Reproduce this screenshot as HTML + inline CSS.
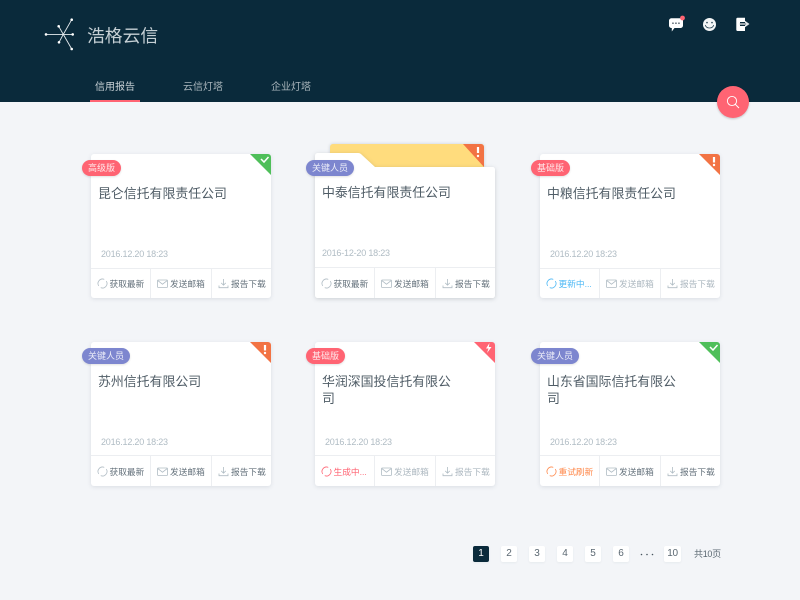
<!DOCTYPE html>
<html lang="zh"><head><meta charset="utf-8"><title>浩格云信</title>
<style>
html,body{margin:0;padding:0}
body{width:800px;height:600px;overflow:hidden;position:relative;background:#f3f5f8;font-family:"Liberation Sans","Noto Sans CJK SC",sans-serif;color:#4c5a64}
div,span,svg{position:absolute;display:block}
.hd{left:0;top:0;width:800px;height:102px;background:#0a2a3b}
.logo{left:87px;top:25px;font-size:17.800px;line-height:22px;color:#c6d0d5;white-space:nowrap}
.nav{top:81px;font-size:10px;line-height:14px;color:#aab6bc;white-space:nowrap}
.ul{left:90px;top:100px;width:50px;height:2px;background:#ff6473}
.sb{left:717px;top:86px;width:32px;height:32px;border-radius:50%;background:#ff6473;box-shadow:0 1px 2px rgba(0,0,0,.2)}
.card{width:180px;height:144px;background:#fff;border-radius:3px;box-shadow:0 1px 4px rgba(40,60,80,.12)}
.tri{right:0;top:0;width:22px;height:22px;border-top-right-radius:3px;overflow:hidden}
.tag{left:-9px;top:6px;height:16px;line-height:16px;border-radius:8px;color:rgba(255,255,255,.85);font-size:9px;text-align:center;white-space:nowrap;box-shadow:0 1px 2px rgba(0,0,0,.12)}
.r{width:39px;background:#ff6473}
.p{width:48px;background:#7d86cf}
.t{left:7px;top:31px;width:135px;font-size:12.900px;line-height:17px;color:#4f5c66}
.d{left:10px;top:94px;font-size:9px;line-height:12px;color:#b0bcc4;white-space:nowrap;letter-spacing:-.2px}
.l{left:0;top:114px;width:180px;height:1px;background:#eceef1}
.v{top:114px;width:1px;height:30px;background:#eceef1}
.a{top:124px;font-size:8.700px;line-height:13px;white-space:nowrap;color:#65727c}
.i{top:124px;width:11px;height:11px}
.off{color:#adb8c0}
.pg{top:546px;width:16px;height:16px;line-height:16px;background:#fff;border-radius:2px;font-size:10px;text-align:center;color:#5b6872;box-shadow:0 1px 2px rgba(40,60,80,.06)}
</style></head><body>
<svg width="0" height="0" style="left:0;top:0">
<defs>
<symbol id="ref" viewBox="0 0 11 11"><g transform="rotate(40 5.500 5.500)"><path d="M1 5.500A4.500 4.500 0 0 1 4.200 1.200M6.800 1.200A4.500 4.500 0 0 1 10 5.500M10 5.500A4.500 4.500 0 0 1 6.800 9.800M4.200 9.800A4.500 4.500 0 0 1 1 5.500" fill="none" stroke="currentColor" stroke-width=".8"/></g></symbol>
<symbol id="mail" viewBox="0 0 11 11"><rect x=".5" y="2" width="10" height="7.400" rx=".7" fill="none" stroke="#b0bcc4" stroke-width=".8"/><path d="M.8 2.600 5.500 6.200 10.200 2.600" fill="none" stroke="#b0bcc4" stroke-width=".8"/></symbol>
<symbol id="dl" viewBox="0 0 11 11"><path d="M5.500 1V7M3.200 4.900 5.500 7.200 7.800 4.900M1 7.500V9.700H10V7.500" fill="none" stroke="#b0bcc4" stroke-width=".8"/></symbol>
</defs></svg>

<div class="hd"></div>
<svg style="left:40px;top:14px" width="40" height="40" viewBox="40 14 40 40"><g stroke="#e6ebee" stroke-width=".9" fill="none"><path d="M46 34.400H72.700M71.700 19.700 63.300 34.400 71.700 49M58.700 26.300 63.300 34.400 59 42.300"/></g><g fill="#fff"><circle cx="46" cy="34.400" r="1.300"/><circle cx="72.700" cy="34.400" r="1.300"/><circle cx="71.700" cy="19.700" r="1.300"/><circle cx="71.700" cy="49" r="1.300"/><circle cx="58.700" cy="26.300" r="1.300"/><circle cx="59" cy="42.300" r="1.300"/></g></svg>
<div class="logo">浩格云信</div>
<div class="nav" style="left:95px;color:#c8d1d6">信用报告</div>
<div class="nav" style="left:183px">云信灯塔</div>
<div class="nav" style="left:271px">企业灯塔</div>
<div class="ul"></div>

<svg style="left:668px;top:15px" width="18" height="18" viewBox="0 0 18 18"><path d="M3.500 3.200H12.500C13.900 3.200 15 4.300 15 5.700V10.500C15 11.900 13.900 13 12.500 13H6.500L3.800 16.500V13H3.500C2.100 13 1 11.900 1 10.500V5.700C1 4.300 2.100 3.200 3.500 3.200Z" fill="#fff"/><g fill="#5b6872"><rect x="4.200" y="7.500" width="1.500" height="1.500"/><rect x="7.200" y="7.500" width="1.500" height="1.500"/><rect x="10.200" y="7.500" width="1.500" height="1.500"/></g><circle cx="14.500" cy="3" r="2.400" fill="#ff6473"/></svg>
<svg style="left:702px;top:17px" width="15" height="15" viewBox="0 0 15 15"><circle cx="7.500" cy="7.500" r="6.500" fill="#f4f6f7"/><circle cx="5" cy="5.600" r=".8" fill="#2a4554"/><circle cx="10" cy="5.600" r=".8" fill="#2a4554"/><path d="M3.300 8C4.300 12 10.700 12 11.700 8" fill="none" stroke="#2a4554" stroke-width=".8"/></svg>
<svg style="left:736px;top:17px" width="14" height="15" viewBox="0 0 14 15"><path d="M1.500 .8H9V5H4V9H9V14H1.500C.8 14 .3 13.500 .3 12.800V2C.3 1.300 .8 .8 1.500 .8Z" fill="#fff"/><path d="M3.500 6H9V3.800L13.500 7 9 10.200V8H3.500Z" fill="#dfe4e7"/><path d="M4 7H10" stroke="#5b6872" stroke-width="1"/></svg>

<div class="sb"><svg style="left:9px;top:9px" width="14" height="14" viewBox="0 0 14 14"><circle cx="6" cy="6" r="4.600" fill="none" stroke="#fff" stroke-width=".9"/><path d="M9.300 9.300 13 13" stroke="#fff" stroke-width="1"/></svg></div>

<!-- Card 1 -->
<div class="card" style="left:91px;top:154px">
<div class="tri"><svg style="left:0;top:0" width="22" height="22"><path d="M1 0H22V21Z" fill="#4fbf5a"/><path d="M12 5 15 8 19.500 3" fill="none" stroke="#fff" stroke-width="1.500"/></svg></div>
<div class="tag r">高级版</div>
<div class="t">昆仑信托有限责任公司</div>
<div class="d">2016.12.20 18:23</div>
<div class="l"></div><div class="v" style="left:59px"></div><div class="v" style="left:120px"></div>
<svg class="i" style="left:6px;color:#b0bcc4"><use href="#ref"/></svg><div class="a" style="left:18.500px">获取最新</div>
<svg class="i" style="left:66px"><use href="#mail"/></svg><div class="a" style="left:79px">发送邮箱</div>
<svg class="i" style="left:127px"><use href="#dl"/></svg><div class="a" style="left:140px">报告下载</div>
</div>

<!-- Card 2 folder -->
<div style="left:330px;top:144px;width:154px;height:30px;background:#ffdc7d;border-radius:3px 3px 0 0;box-shadow:0 0 3px rgba(40,60,80,.2);overflow:hidden">
<svg style="left:133px;top:0" width="22" height="24"><path d="M0 0H21V23Z" fill="#f27344"/><path d="M15 3V9" stroke="#fff" stroke-width="2.200"/><circle cx="15" cy="12" r="1.200" fill="#fff"/></svg>
</div>
<svg style="left:310px;top:148px" width="190" height="155" viewBox="310 148 190 155">
<path d="M318 153H358C360 153 361 154 362 155L375 167H492.500C494 167 495 168 495 169.500V295C495 297 494 298 492.500 298H318C316 298 315 297 315 295V156C315 154 316 153 318 153Z" fill="#fff" style="filter:drop-shadow(0 1px 2px rgba(40,50,60,.2))"/>
</svg>
<div style="left:315px;top:154px;width:180px;height:144px">
<div class="tag p">关键人员</div>
<div class="t" style="top:30px">中泰信托有限责任公司</div>
<div class="d" style="left:7px;top:93px">2016-12-20 18:23</div>
<div class="l" style="top:113px"></div><div class="v" style="left:59px"></div><div class="v" style="left:120px"></div>
<svg class="i" style="left:6px;color:#b0bcc4"><use href="#ref"/></svg><div class="a" style="left:18.500px">获取最新</div>
<svg class="i" style="left:66px"><use href="#mail"/></svg><div class="a" style="left:79px">发送邮箱</div>
<svg class="i" style="left:127px"><use href="#dl"/></svg><div class="a" style="left:140px">报告下载</div>
</div>

<!-- Card 3 -->
<div class="card" style="left:540px;top:154px">
<div class="tri"><svg style="left:0;top:0" width="22" height="22"><path d="M1 0H22V21Z" fill="#f27344"/><path d="M16 3V8.500" stroke="#fff" stroke-width="2.200"/><circle cx="16" cy="11" r="1.200" fill="#fff"/></svg></div>
<div class="tag r">基础版</div>
<div class="t">中粮信托有限责任公司</div>
<div class="d">2016.12.20 18:23</div>
<div class="l"></div><div class="v" style="left:59px"></div><div class="v" style="left:120px"></div>
<svg class="i" style="left:6px;color:#4db8f5"><use href="#ref"/></svg><div class="a" style="left:18.500px;color:#4db8f5">更新中...</div>
<svg class="i" style="left:66px"><use href="#mail"/></svg><div class="a off" style="left:79px">发送邮箱</div>
<svg class="i" style="left:127px"><use href="#dl"/></svg><div class="a off" style="left:140px">报告下载</div>
</div>

<!-- Card 4 -->
<div class="card" style="left:91px;top:342px">
<div class="tri"><svg style="left:0;top:0" width="22" height="22"><path d="M1 0H22V21Z" fill="#f27344"/><path d="M16 3V8.500" stroke="#fff" stroke-width="2.200"/><circle cx="16" cy="11" r="1.200" fill="#fff"/></svg></div>
<div class="tag p">关键人员</div>
<div class="t">苏州信托有限公司</div>
<div class="d">2016.12.20 18:23</div>
<div class="l" style="top:113px"></div><div class="v" style="left:59px"></div><div class="v" style="left:120px"></div>
<svg class="i" style="left:6px;color:#b0bcc4"><use href="#ref"/></svg><div class="a" style="left:18.500px">获取最新</div>
<svg class="i" style="left:66px"><use href="#mail"/></svg><div class="a" style="left:79px">发送邮箱</div>
<svg class="i" style="left:127px"><use href="#dl"/></svg><div class="a" style="left:140px">报告下载</div>
</div>

<!-- Card 5 -->
<div class="card" style="left:315px;top:342px">
<div class="tri"><svg style="left:0;top:0" width="22" height="22"><path d="M1 0H22V21Z" fill="#ff6473"/><path d="M16.500 1 13 6.500H15.500L14 11 18.500 5H15.800Z" fill="#fff"/></svg></div>
<div class="tag r">基础版</div>
<div class="t">华润深国投信托有限公司</div>
<div class="d">2016.12.20 18:23</div>
<div class="l" style="top:113px"></div><div class="v" style="left:59px"></div><div class="v" style="left:120px"></div>
<svg class="i" style="left:6px;color:#ff6473"><use href="#ref"/></svg><div class="a" style="left:18.500px;color:#ff6473">生成中...</div>
<svg class="i" style="left:66px"><use href="#mail"/></svg><div class="a off" style="left:79px">发送邮箱</div>
<svg class="i" style="left:127px"><use href="#dl"/></svg><div class="a off" style="left:140px">报告下载</div>
</div>

<!-- Card 6 -->
<div class="card" style="left:540px;top:342px">
<div class="tri"><svg style="left:0;top:0" width="22" height="22"><path d="M1 0H22V21Z" fill="#4fbf5a"/><path d="M12 5 15 8 19.500 3" fill="none" stroke="#fff" stroke-width="1.500"/></svg></div>
<div class="tag p">关键人员</div>
<div class="t">山东省国际信托有限公司</div>
<div class="d">2016.12.20 18:23</div>
<div class="l" style="top:113px"></div><div class="v" style="left:59px"></div><div class="v" style="left:120px"></div>
<svg class="i" style="left:6px;color:#ff8a4d"><use href="#ref"/></svg><div class="a" style="left:18.500px;color:#ff8a4d">重试刷新</div>
<svg class="i" style="left:66px"><use href="#mail"/></svg><div class="a" style="left:79px">发送邮箱</div>
<svg class="i" style="left:127px"><use href="#dl"/></svg><div class="a" style="left:140px">报告下载</div>
</div>

<!-- Pagination -->
<div class="pg" style="left:473px;background:#0a2a3b;color:#fff">1</div>
<div class="pg" style="left:501px">2</div>
<div class="pg" style="left:529px">3</div>
<div class="pg" style="left:557px">4</div>
<div class="pg" style="left:585px">5</div>
<div class="pg" style="left:613px">6</div>
<svg style="left:640px;top:553px" width="14" height="3"><circle cx="1.500" cy="1.500" r=".8" fill="#47555f"/><circle cx="7" cy="1.500" r=".8" fill="#47555f"/><circle cx="12.500" cy="1.500" r=".8" fill="#47555f"/></svg>
<div class="pg" style="left:664px;width:17px;letter-spacing:-.3px">10</div>
<div style="left:694px;top:547px;font-size:9px;line-height:14px;color:#5b6872;white-space:nowrap;letter-spacing:-.3px">共10页</div>
</body></html>
